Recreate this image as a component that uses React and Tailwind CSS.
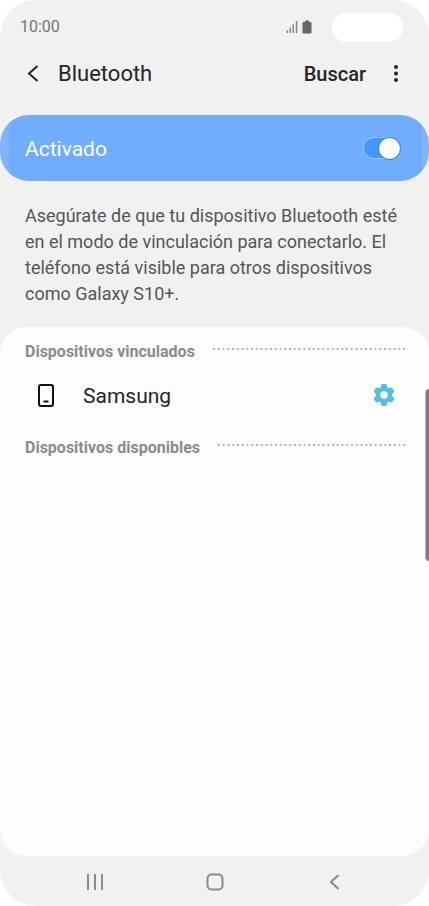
import { useState } from 'react';

function SectionTitle({ id, children }) {
  return (
    <div className="flex items-center gap-[18px] pl-[25px] pr-[21px]">
      <h2 id={id} className="pt-0.5 text-base font-bold leading-6 text-[#8b8b8b]">
        {children}
      </h2>
      <svg className="mb-1 h-[2px] min-w-0 flex-1" aria-hidden="true">
        <line x1="0" y1="1" x2="100%" y2="1" stroke="#b4b4b4" strokeWidth="2" strokeDasharray="2 2.75" />
      </svg>
    </div>
  );
}

function StatusBar() {
  return (
    <div className="flex h-[54px] items-center pl-5 pr-[26px]">
      <span className="text-base text-[#747474]">10:00</span>
      <svg className="ml-auto h-[14px] w-[12px]" viewBox="0 0 12 14" fill="#858585" aria-hidden="true">
        <rect x="0.5" y="10.5" width="1.5" height="2.5" />
        <rect x="3.5" y="7.5" width="1.5" height="5.5" />
        <rect x="6.5" y="4.5" width="1.5" height="8.5" />
        <rect x="9.8" y="1" width="1.5" height="12" />
      </svg>
      <svg className="ml-1 h-[14px] w-[10px]" viewBox="0 0 10 14" fill="#666" aria-hidden="true">
        <path d="M3 .5h4v1.5h1.5q1 0 1 1v9.500q0 1-1 1h-7q-1 0-1-1V3q0-1 1-1H3z" />
      </svg>
      <div className="ml-5 h-[29px] w-[71px] rounded-full bg-white" />
    </div>
  );
}

export default function App() {
  const [enabled, setEnabled] = useState(true);

  return (
    <div className="min-h-screen bg-white font-[Roboto,sans-serif]">
      <div className="relative flex min-h-screen flex-col overflow-hidden rounded-[36px] bg-[#f1f1f1]">
        <StatusBar />

        <header className="flex h-10 items-center px-[21px] text-[#252525]">
          <button type="button" aria-label="Atrás" className="flex h-10 w-6 items-center justify-center">
            <svg className="h-[18px] w-3" viewBox="0 0 12 18" fill="none" stroke="currentColor" strokeWidth="2" aria-hidden="true">
              <path d="M10.500 1L2 8.500L10.500 16" />
            </svg>
          </button>
          <h1 className="ml-[13px] text-[22px] leading-7">Bluetooth</h1>
          <button type="button" className="ml-auto text-[20px] font-medium leading-7">
            Buscar
          </button>
          <button type="button" aria-label="Más opciones" className="ml-[18px] flex h-10 w-6 items-center justify-center">
            <svg className="h-[18px] w-1" viewBox="0 0 4 18" fill="currentColor" aria-hidden="true">
              <circle cx="2" cy="2" r="2" />
              <circle cx="2" cy="8.500" r="2" />
              <circle cx="2" cy="15" r="2" />
            </svg>
          </button>
        </header>

        <label className="mt-[21px] flex h-[66px] items-center justify-between rounded-[29px] bg-[#70adfc] pl-[25px] pr-7 text-[21px] text-white">
          <span className="pt-[3px]">Activado</span>
          <span className="relative flex h-[23px] w-[38px] items-center">
            <input
              type="checkbox"
              role="switch"
              checked={enabled}
              onChange={(e) => setEnabled(e.target.checked)}
              className="peer h-[22px] w-9 appearance-none rounded-full border border-[#98c6ff] bg-[#a9bed8] checked:bg-[#4396fb]"
            />
            <span className="pointer-events-none absolute left-0 top-0 size-[23px] rounded-full border border-[#1f7bd6] bg-[#fcfcfc] peer-checked:left-auto peer-checked:right-0" />
          </span>
        </label>

        <p className="mt-[22px] pl-[25px] pr-6 text-[18px] leading-[26px] text-[#555]">
          Asegúrate de que tu dispositivo Bluetooth esté en el modo de vinculación para conectarlo. El teléfono está visible para otros dispositivos como Galaxy S10+.
        </p>

        <main className="mt-5 flex-1 rounded-[27px] bg-[#fdfdfd] pt-[11px]">
          <section aria-labelledby="paired">
            <SectionTitle id="paired">Dispositivos vinculados</SectionTitle>
            <div className="flex h-[70px] items-center pb-2 pl-[37px] pr-[33px]">
              <svg className="h-[23px] w-[17px]" viewBox="0 0 17 23" fill="none" stroke="#111" strokeWidth="2" aria-hidden="true">
                <rect x="2" y="1" width="14" height="21" rx="2" />
                <path d="M6.500 17.500h5" />
              </svg>
              <button type="button" className="ml-[29px] pt-px text-[21px] leading-7 text-[#252525]">
                Samsung
              </button>
              <button type="button" aria-label="Ajustes de Samsung" className="ml-auto flex size-6 items-center justify-center">
                <svg className="size-6" viewBox="0 0 24 24" aria-hidden="true">
                  <g fill="#56bce3" stroke="#56bce3" strokeWidth="2" strokeLinejoin="round">
                    <path d="M10.300 2h3.400l.8 3.200 2 1.100 3-.9 1.700 3-2.200 2.300v2.600l2.200 2.300-1.700 3-3-.9-2 1.100-.8 3.200h-3.400l-.8-3.200-2-1.100-3 .9-1.700-3 2.200-2.300v-2.600L2.800 8.400l1.700-3 3 .9 2-1.100z" />
                  </g>
                  <circle cx="12" cy="12" r="3.800" fill="#fdfdfd" />
                </svg>
              </button>
            </div>
          </section>
          <section aria-labelledby="available">
            <SectionTitle id="available">Dispositivos disponibles</SectionTitle>
          </section>
        </main>

        <nav className="flex h-[50px] items-center justify-between px-[83px] pt-px">
          <button type="button" aria-label="Recientes" className="flex size-6 items-center justify-center">
            <svg className="size-4" viewBox="0 0 16 16" stroke="#8b8b8b" strokeWidth="2" aria-hidden="true">
              <path d="M1 0v16M8 0v16M15 0v16" />
            </svg>
          </button>
          <button type="button" aria-label="Inicio" className="flex size-6 items-center justify-center">
            <svg className="size-[18px]" viewBox="0 0 18 18" fill="none" stroke="#8b8b8b" strokeWidth="2" aria-hidden="true">
              <rect x="1.500" y="1.500" width="15" height="15" rx="4" />
            </svg>
          </button>
          <button type="button" aria-label="Volver" className="flex size-6 items-center justify-center">
            <svg className="h-4 w-[10px]" viewBox="0 0 10 16" fill="none" stroke="#8b8b8b" strokeWidth="2" aria-hidden="true">
              <path d="M9.500 1L2 8L9.500 15" />
            </svg>
          </button>
        </nav>

        {/* glossy curved edges and the side key */}
        <div className="pointer-events-none absolute inset-y-0 left-0 w-[9px] bg-white/10" />
        <div className="pointer-events-none absolute inset-y-0 right-0 w-[7px] bg-white/10" />
        <div className="absolute right-0 top-[389px] h-[172px] w-1 rounded-l-[4px] border-l border-[#b5b4bb] bg-[#7e7b89]" />
      </div>
    </div>
  );
}
